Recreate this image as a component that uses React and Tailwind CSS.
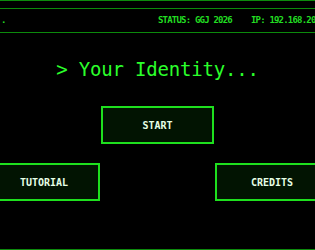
export default function App() {
  const mono = "font-['DejaVu_Sans_Mono','Liberation_Mono',monospace]";

  return (
    <div
      className={`w-[315px] h-[250px] bg-black overflow-hidden flex flex-col border-b border-[#0c8a0c] ${mono}`}
    >
      {/* top rule */}
      <div className="h-[8px] shrink-0 border-t border-[#0c8a0c]" />

      {/* status bar */}
      <div className="h-[25px] shrink-0 border-y border-[#0c8a0c] flex items-center whitespace-nowrap text-[#22dd22] text-[9px] font-bold tracking-[-0.8px]">
        <span className="w-[158px] shrink-0 pl-[1px]">.</span>
        <span className="shrink-0">STATUS: GGJ 2026</span>
        <span className="shrink-0 ml-[19px]">IP: 192.168.201.7</span>
      </div>

      {/* title */}
      <h1 className="mt-[24px] h-[24px] leading-[24px] text-center text-[19px] text-[#2bff2b] whitespace-nowrap tracking-[-0.2px]">
        &gt; Your Identity...
      </h1>

      {/* start */}
      <div className="mt-[25px] flex justify-center">
        <button className="w-[113px] h-[38px] border-2 border-[#1ee01e] bg-[#021402] text-[#e6ffe6] text-[10px] font-bold">
          START
        </button>
      </div>

      {/* lower row */}
      <div className="mt-[19px] -ml-[12px] w-[341px] flex justify-between">
        <button className="w-[112px] h-[38px] border-2 border-[#1ee01e] bg-[#021402] text-[#e6ffe6] text-[10px] font-bold">
          TUTORIAL
        </button>
        <button className="w-[114px] h-[38px] border-2 border-[#1ee01e] bg-[#021402] text-[#e6ffe6] text-[10px] font-bold">
          CREDITS
        </button>
      </div>
    </div>
  );
}
